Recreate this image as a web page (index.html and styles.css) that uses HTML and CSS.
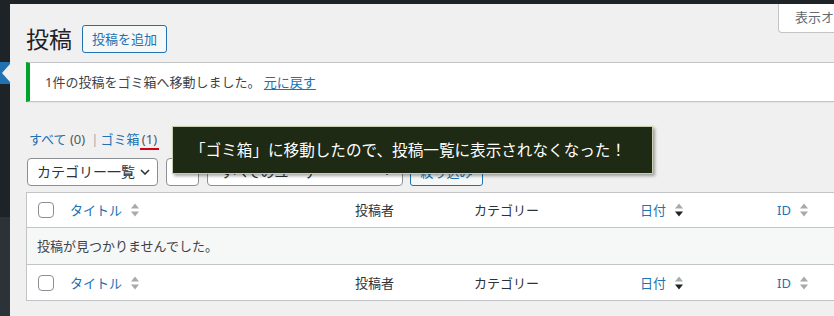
FILE: index.html
```html
<!DOCTYPE html>
<html lang="ja">
<head>
<meta charset="utf-8">
<title>投稿</title>
<link rel="stylesheet" href="styles.css">
</head>
<body>
<div class="adminbar"></div>
<div class="shell">
  <nav class="adminmenu">
    <div class="menu-top"></div>
    <div class="menu-current"><span class="menu-arrow"></span></div>
    <div class="menu-sub"></div>
    <div class="menu-rest"></div>
  </nav>
  <main class="content">
    <div class="screen-meta"><span class="screen-tab">表示オプション</span></div>
    <div class="page-head">
      <h1 class="page-title">投稿</h1>
      <a class="btn-add">投稿を追加</a>
    </div>
    <div class="notice">
      <p>1件の投稿をゴミ箱へ移動しました。 <a class="undo">元に戻す</a></p>
    </div>
    <ul class="subsubsub">
      <li><a class="sub-link">すべて</a> <span class="count">(0)</span></li>
      <li class="sep">|</li>
      <li><a class="sub-link">ゴミ箱</a> <span class="count marked">(1)</span></li>
    </ul>
    <div class="filters">
      <div class="select sel-cat"><span>カテゴリー一覧</span><svg class="chev" viewBox="0 0 10 6"><polyline points="1,1 5,5 9,1"/></svg></div>
      <div class="select sel-small"><span>-</span></div>
      <div class="select sel-user"><span>すべてのユーザー</span><svg class="chev" viewBox="0 0 10 6"><polyline points="1,1 5,5 9,1"/></svg></div>
      <a class="btn-filter">絞り込み</a>
    </div>
    <table class="posts">
      <colgroup>
        <col class="c-cb"><col class="c-title"><col class="c-author"><col class="c-cat"><col class="c-date"><col class="c-id">
      </colgroup>
      <thead>
        <tr>
          <th class="cb"><span class="checkbox"></span></th>
          <th><a class="sort"><span>タイトル</span><svg class="sort-ind" viewBox="0 0 10 16"><polygon class="up" points="1,6.5 5,1.5 9,6.5"/><polygon class="down" points="1,9.5 9,9.5 5,14.5"/></svg></a></th>
          <th>投稿者</th>
          <th>カテゴリー</th>
          <th><a class="sort"><span>日付</span><svg class="sort-ind active-down" viewBox="0 0 10 16"><polygon class="up" points="1,6.5 5,1.5 9,6.5"/><polygon class="down" points="1,9.5 9,9.5 5,14.5"/></svg></a></th>
          <th><a class="sort"><span>ID</span><svg class="sort-ind" viewBox="0 0 10 16"><polygon class="up" points="1,6.5 5,1.5 9,6.5"/><polygon class="down" points="1,9.5 9,9.5 5,14.5"/></svg></a></th>
        </tr>
      </thead>
      <tbody>
        <tr class="empty"><td colspan="6">投稿が見つかりませんでした。</td></tr>
      </tbody>
      <tfoot>
        <tr>
          <th class="cb"><span class="checkbox"></span></th>
          <th><a class="sort"><span>タイトル</span><svg class="sort-ind" viewBox="0 0 10 16"><polygon class="up" points="1,6.5 5,1.5 9,6.5"/><polygon class="down" points="1,9.5 9,9.5 5,14.5"/></svg></a></th>
          <th>投稿者</th>
          <th>カテゴリー</th>
          <th><a class="sort"><span>日付</span><svg class="sort-ind active-down" viewBox="0 0 10 16"><polygon class="up" points="1,6.5 5,1.5 9,6.5"/><polygon class="down" points="1,9.5 9,9.5 5,14.5"/></svg></a></th>
          <th><a class="sort"><span>ID</span><svg class="sort-ind" viewBox="0 0 10 16"><polygon class="up" points="1,6.5 5,1.5 9,6.5"/><polygon class="down" points="1,9.5 9,9.5 5,14.5"/></svg></a></th>
        </tr>
      </tfoot>
    </table>
    <div class="callout">「ゴミ箱」に移動したので、投稿一覧に表示されなくなった！</div>
  </main>
</div>
</body>
</html>
```
FILE: styles.css
```css
* { box-sizing: border-box; }
html, body { margin: 0; padding: 0; }
body {
  width: 834px;
  height: 316px;
  overflow: hidden;
  background: #f0f0f1;
  font-family: "Noto Sans", "Noto Sans CJK JP", sans-serif;
  font-size: 13px;
  color: #3c434a;
}
a { text-decoration: none; }

.adminbar { height: 4px; background: #1d2327; }

.shell { display: flex; height: 312px; }

.adminmenu {
  width: 10px;
  flex: none;
  display: flex;
  flex-direction: column;
}
.menu-top { height: 58px; background: #1d2327; }
.menu-current {
  height: 22px;
  background: #2271b1;
  position: relative;
}
.menu-arrow {
  position: absolute;
  right: 0;
  top: 2px;
  width: 0; height: 0;
  border-top: 9px solid transparent;
  border-bottom: 9px solid transparent;
  border-right: 8px solid #f0f0f1;
}
.menu-sub { height: 133px; background: #1d2327; }
.menu-rest { flex: 1; background: #2c3338; }

.content {
  flex: 1;
  min-width: 0;
  padding-left: 16px;
  position: relative;
}

.screen-meta {
  height: 0;
  display: flex;
  justify-content: flex-end;
}
.screen-tab {
  flex: none;
  width: 110px;
  height: 29px;
  margin-right: -54px;
  padding-left: 16px;
  background: #fff;
  border: 1px solid #c3c4c7;
  border-top: none;
  border-radius: 0 0 4px 4px;
  color: #646970;
  font-size: 13px;
  line-height: 27px;
  white-space: nowrap;
  overflow: hidden;
}

.page-head {
  margin-top: 21px;
  height: 28px;
  display: flex;
  align-items: center;
  gap: 10px;
}
.page-title {
  margin: 0;
  font-size: 23px;
  font-weight: 400;
  line-height: 28px;
  color: #1d2327;
}
.btn-add {
  height: 28px;
  padding: 0 9px;
  border: 1px solid #2271b1;
  border-radius: 3px;
  background: #f6f7f7;
  color: #2271b1;
  font-size: 13px;
  line-height: 26px;
  white-space: nowrap;
}

.notice {
  margin: 9px -60px 0 0;
  height: 40px;
  background: #fff;
  border: 1px solid #c3c4c7;
  border-left: 4px solid #00a32a;
  box-shadow: 0 1px 1px rgba(0,0,0,.04);
  display: flex;
  align-items: center;
  padding-left: 15px;
}
.notice p { margin: 0; line-height: 20px; color: #3c434a; }
.undo { color: #2271b1; text-decoration: underline; text-underline-offset: 2px; }

.subsubsub {
  list-style: none;
  margin: 27px 0 0;
  padding: 0 0 0 3px;
  height: 20px;
  display: flex;
  align-items: center;
  gap: 6px;
  line-height: 20px;
  color: #646970;
}
.subsubsub li { white-space: nowrap; }
.sub-link { color: #2271b1; }
.count { color: #50575e; }
.sep { color: #a7aaad; margin-right: -4px; }
.marked {
  display: inline-block;
  line-height: 17px;
  margin-left: -3px;
  padding: 0 2px;
  border-bottom: 2px solid #d0021b;
}

.filters {
  margin: 9px 0 0 1px;
  height: 28px;
  display: flex;
  gap: 8px;
}
.select {
  height: 28px;
  border: 1px solid #8c8f94;
  border-radius: 4px;
  background: #fff;
  color: #2c3338;
  font-size: 14px;
  line-height: 26px;
  padding-left: 9px;
  display: flex;
  align-items: center;
  justify-content: space-between;
  white-space: nowrap;
  overflow: hidden;
}
.sel-cat { width: 131px; padding-right: 7px; }
.sel-small { width: 33px; justify-content: center; padding-left: 0; }
.sel-user { width: 196px; padding-left: 12px; padding-right: 10px; }
.chev { width: 10px; height: 6px; flex: none; }
.chev polyline { fill: none; stroke: #2c3338; stroke-width: 1.6; }
.btn-filter {
  width: 73px;
  height: 28px;
  margin-left: -1px;
  border: 1px solid #2271b1;
  border-radius: 3px;
  background: #f6f7f7;
  color: #2271b1;
  font-size: 13px;
  line-height: 26px;
  text-align: center;
}

.posts {
  margin-top: 6px;
  width: 870px;
  table-layout: fixed;
  border-collapse: separate;
  border-spacing: 0;
  border: 1px solid #c3c4c7;
  background: #fff;
}
.c-cb { width: 33px; }
.c-title { width: 285px; }
.c-author { width: 119px; }
.c-cat { width: 166px; }
.c-date { width: 137px; }
.c-id { width: 128px; }

.posts th, .posts td {
  text-align: left;
  font-weight: 400;
  font-size: 13px;
  line-height: 20px;
  color: #2c3338;
  padding: 7px 10px;
  white-space: nowrap;
}
.posts thead th { border-bottom: 1px solid #c3c4c7; }
.posts tfoot th { padding-top: 8px; }
.posts th.cb { padding-left: 11px; padding-right: 0; }
.checkbox {
  display: block;
  width: 16px;
  height: 16px;
  margin: 2px 0;
  border: 1px solid #8c8f94;
  border-radius: 4px;
  background: #fff;
}
.sort {
  display: inline-flex;
  align-items: center;
  gap: 8px;
  color: #2271b1;
}
.sort-ind { width: 10px; height: 16px; flex: none; }
.sort-ind polygon { fill: #a7aaad; }
.sort-ind.active-down .down { fill: #1d2327; }

.empty td {
  background: #f6f7f7;
  padding: 8px 10px;
  border-bottom: 1px solid #c3c4c7;
  color: #3c434a;
}

.callout {
  position: absolute;
  left: 162px;
  top: 122px;
  width: 481px;
  height: 48px;
  background: #1f2a14;
  border: 1px solid #c8ceb2;
  box-shadow: 2px 2px 3px rgba(0,0,0,.35);
  color: #fff;
  font-size: 15.6px;
  line-height: 46px;
  padding-left: 17px;
  white-space: nowrap;
}
```
